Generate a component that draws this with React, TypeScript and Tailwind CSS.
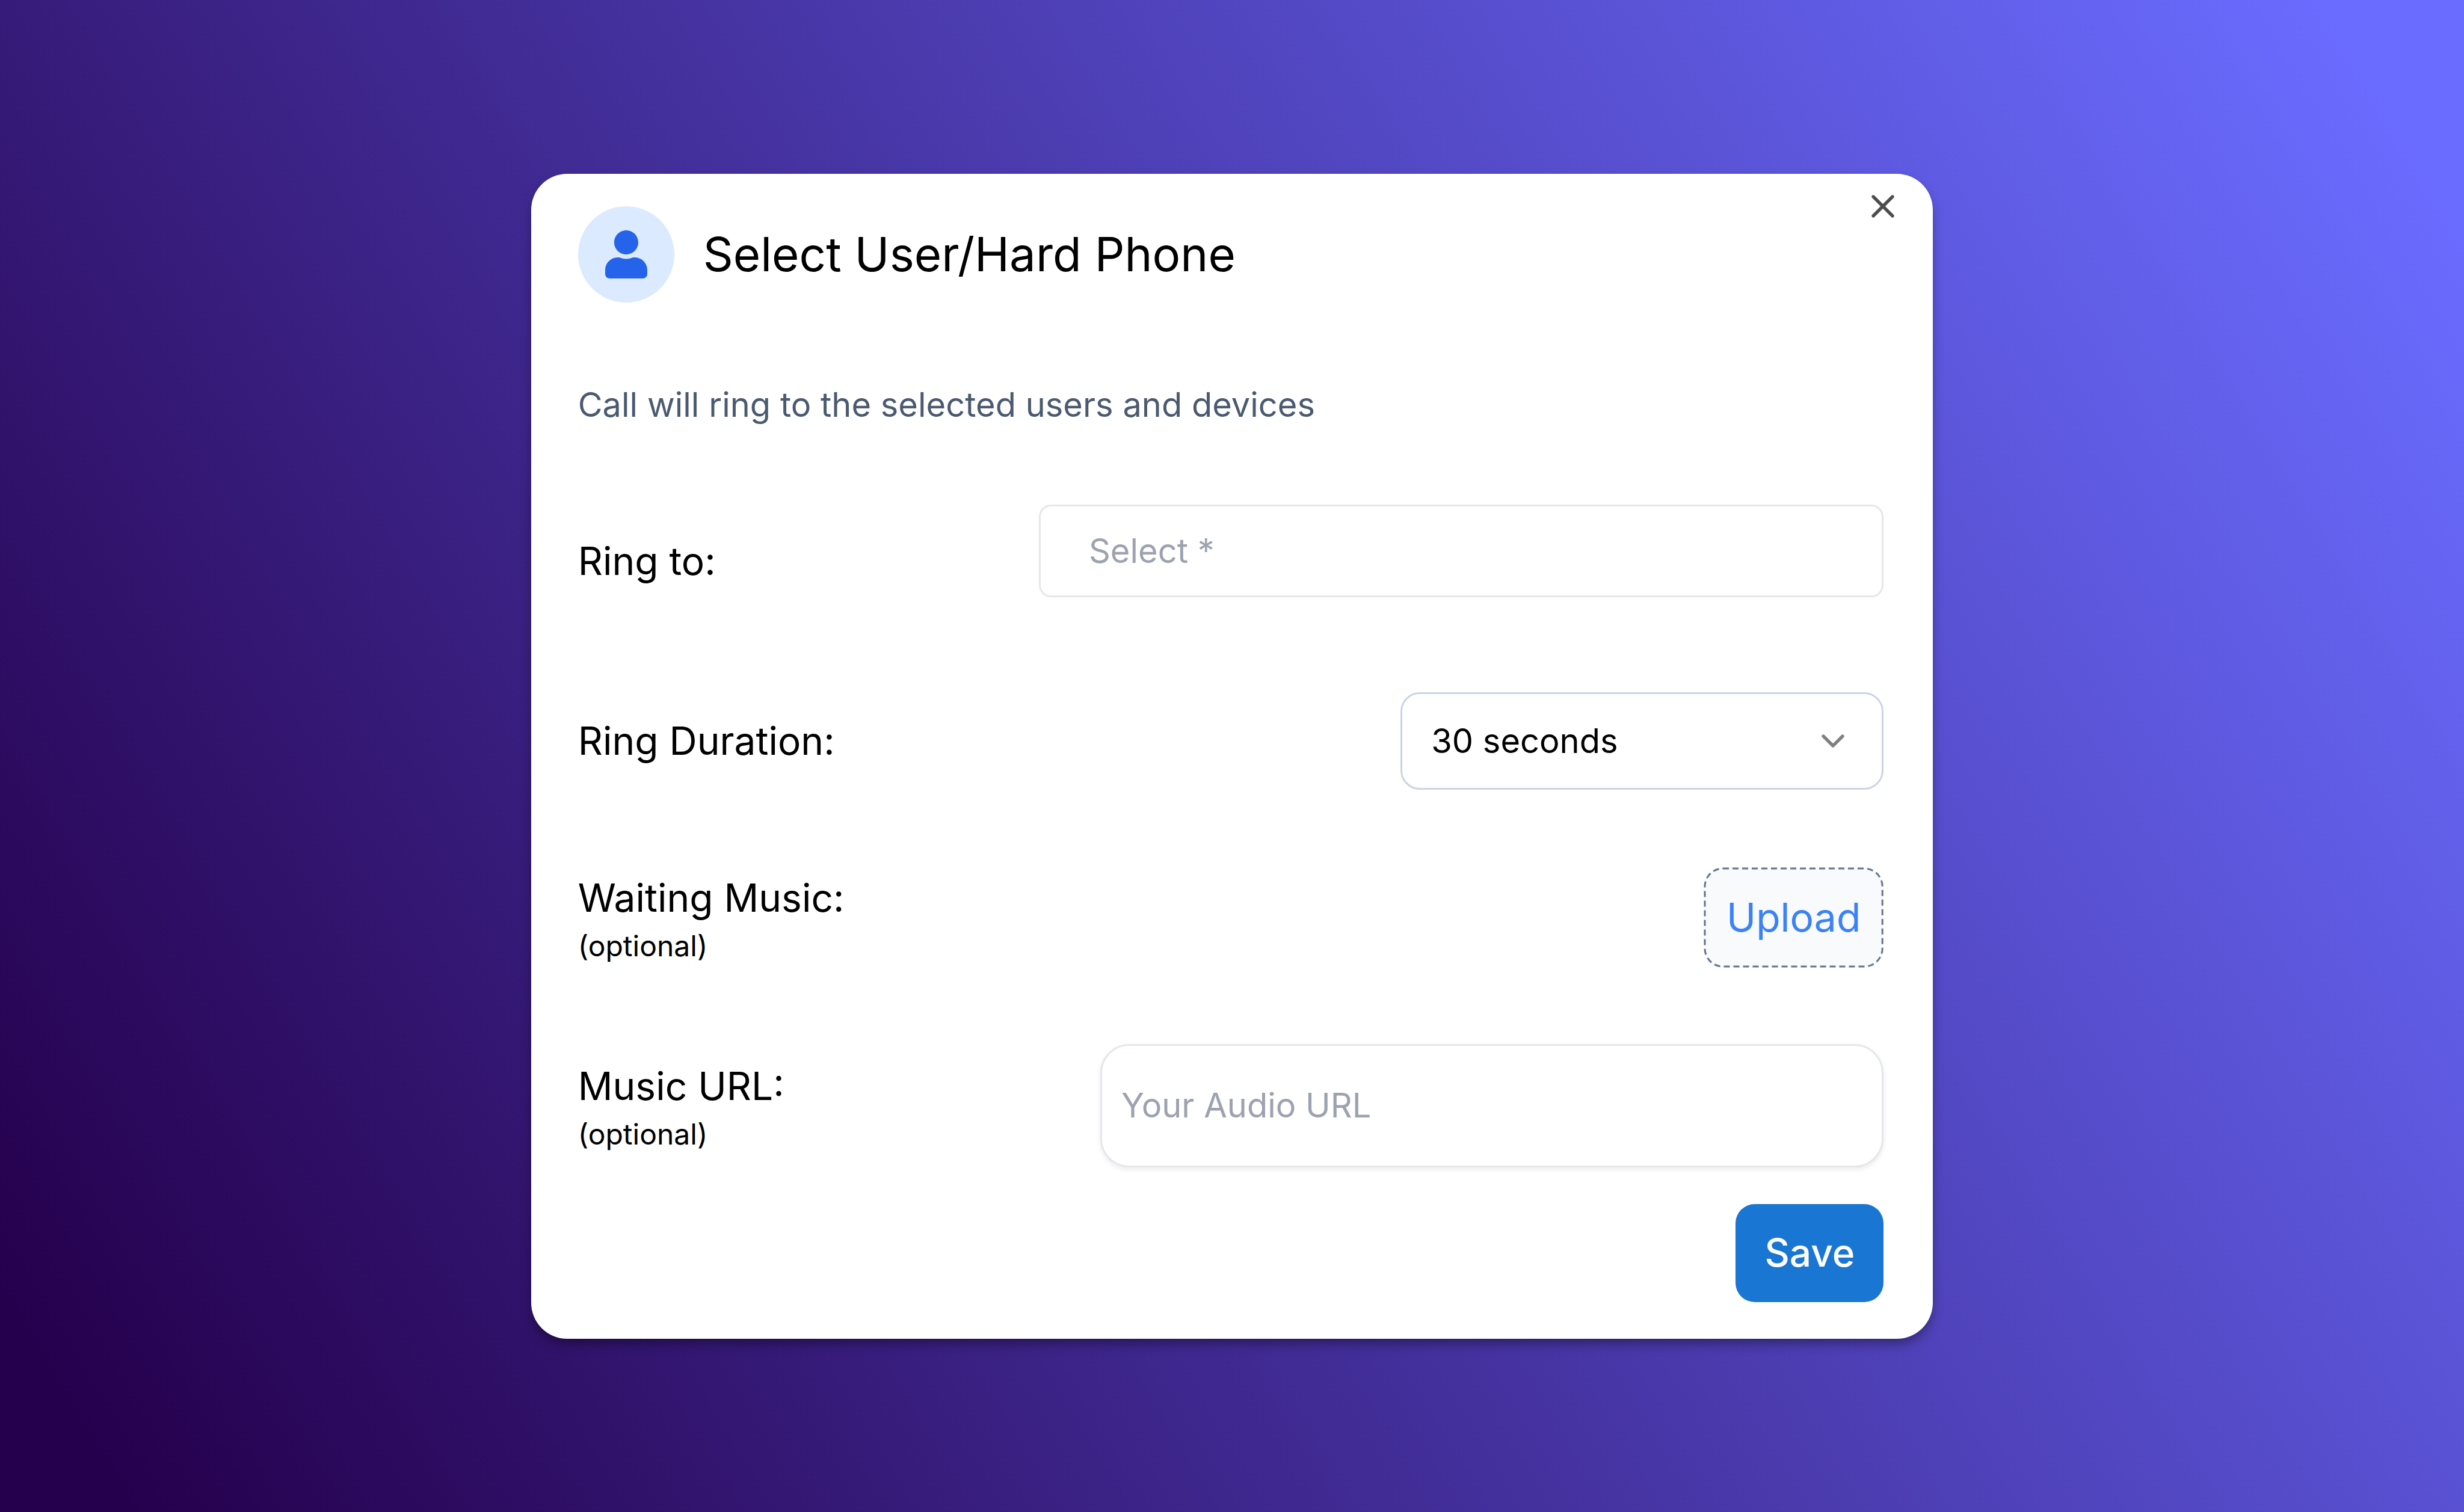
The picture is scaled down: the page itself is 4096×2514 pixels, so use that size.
import { useState, type ReactNode } from "react";
import { ChevronDown, X } from "lucide-react";
import { FaUser } from "react-icons/fa";

function FieldLabel({ htmlFor, optional, children }: { htmlFor: string; optional?: boolean; children: ReactNode }) {
  return (
    <label htmlFor={htmlFor} className="flex shrink-0 flex-col text-[64px] leading-[96px]">
      {children}
      {optional && <span className="text-[48px] leading-[64px]">(optional)</span>}
    </label>
  );
}

export default function App() {
  const [duration, setDuration] = useState("30");

  return (
    <main className="flex min-h-screen items-center justify-center bg-[linear-gradient(59deg,#25004d_4%,#6a6cff_96%)] font-['Inter',sans-serif] text-black">
      <form
        role="dialog"
        aria-labelledby="dialog-title"
        onSubmit={(e) => e.preventDefault()}
        className="relative flex w-[56.9%] flex-col rounded-[60px] bg-white pt-[54px] pr-[82px] pb-[61px] pl-[78px] shadow-[0_10px_20px_-3px_rgba(0,0,0,0.4)]"
      >
        <button type="button" aria-label="Close" className="absolute top-[22px] right-[51px] text-[#4d4d4d]">
          <X className="size-16" />
        </button>

        <header className="flex items-center gap-12">
          <span className="flex size-40 items-center justify-center rounded-full bg-[#dbeafe]">
            <FaUser className="size-20 text-[#2563eb]" />
          </span>
          <h1 id="dialog-title" className="text-[78px] leading-[112px]">Select User/Hard Phone</h1>
        </header>

        <p className="mt-[130px] text-[56px] leading-[80px] text-[#4b5a70]">
          Call will ring to the selected users and devices
        </p>

        <div className="mt-[126px] flex items-end justify-between">
          <div className="pb-3">
            <FieldLabel htmlFor="ring-to">Ring to:</FieldLabel>
          </div>
          <input
            id="ring-to"
            type="text"
            placeholder="Select *"
            className="h-[154px] w-[64.7%] rounded-[20px] border-[3px] border-[#e5e7eb] bg-white px-20 text-[56px] placeholder:text-[#9ca3af]"
          />
        </div>

        <div className="mt-[158px] flex items-center justify-between">
          <FieldLabel htmlFor="ring-duration">Ring Duration:</FieldLabel>
          <div className="relative w-[37%]">
            <select
              id="ring-duration"
              value={duration}
              onChange={(e) => setDuration(e.target.value)}
              className="block h-[162px] w-full appearance-none rounded-[32px] border-[3px] border-[#cbd5e1] bg-white px-12 text-[56px]"
            >
              <option value="15">15 seconds</option>
              <option value="30">30 seconds</option>
              <option value="60">60 seconds</option>
            </select>
            <ChevronDown className="pointer-events-none absolute inset-y-0 right-[52px] my-auto size-16 text-[#808080]" />
          </div>
        </div>

        <div className="mt-[129px] flex items-center justify-between">
          <FieldLabel htmlFor="waiting-music" optional>Waiting Music:</FieldLabel>
          <button
            id="waiting-music"
            type="button"
            className="relative h-[167px] rounded-[32px] bg-[#f8fafc] px-[38px] text-[66px] text-[#3b82f6]"
          >
            <svg aria-hidden="true" className="absolute inset-0 size-full overflow-visible p-0.5 text-[#64748b]">
              <rect width="100%" height="100%" rx="30" fill="none" stroke="currentColor" strokeWidth="3" strokeDasharray="10 6" />
            </svg>
            Upload
          </button>
        </div>

        <div className="mt-[127px] flex items-center justify-between">
          <FieldLabel htmlFor="music-url" optional>Music URL:</FieldLabel>
          <input
            id="music-url"
            type="text"
            placeholder="Your Audio URL"
            className="h-[205px] w-[60%] rounded-[48px] border-[3px] border-[#e5e7eb] bg-white px-8 text-[56px] shadow-[0_4px_8px_rgba(0,0,0,0.08)] placeholder:text-[#9ca3af]"
          />
        </div>

        <button
          type="submit"
          className="mt-[61px] h-[163px] self-end rounded-[32px] bg-[#1976d2] px-12 text-[64px] font-medium text-white"
        >
          Save
        </button>
      </form>
    </main>
  );
}
